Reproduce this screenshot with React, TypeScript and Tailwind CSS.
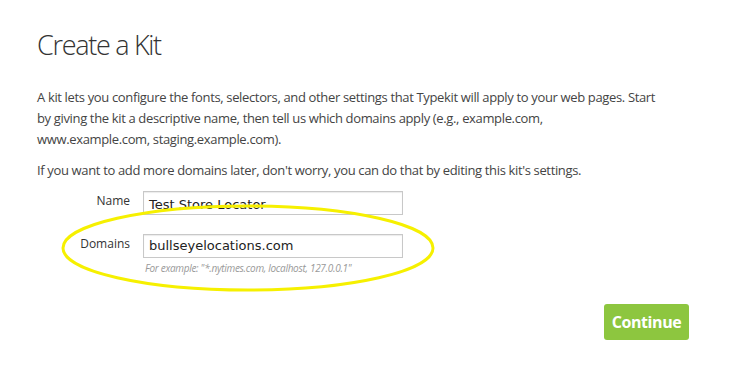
import React from 'react';

export default function App() {
  return (
    <div className="relative w-[743px] h-[380px] bg-white overflow-hidden" style={{ fontFamily: '"Open Sans", "Liberation Sans", sans-serif' }}>
      <div className="pl-[37px] pr-[20px] pt-[28px]">
        {/* Header */}
        <h1 className="text-[27px] leading-[34px] font-light text-[#333] tracking-[-1.3px]">Create a Kit</h1>

        {/* Intro */}
        <p className="mt-[25px] text-[13px] leading-[21px] text-[#444] tracking-[-0.35px] whitespace-nowrap">
          A kit lets you configure the fonts, selectors, and other settings that Typekit will apply to your web pages. Start
          <br />
          by giving the kit a descriptive name, then tell us which domains apply (e.g., example.com,
          <br />
          www.example.com, staging.example.com).
        </p>
        <p className="mt-[10px] text-[13px] leading-[21px] text-[#444] tracking-[-0.35px] whitespace-nowrap">
          If you want to add more domains later, don't worry, you can do that by editing this kit's settings.
        </p>

        {/* Form */}
        <div className="mt-[10px] flex flex-col gap-[19px]">
          <div className="flex items-start">
            <label className="w-[93px] text-right text-[12px] leading-[18px] text-[#333] pt-[1px]">Name</label>
            <div className="ml-[13px] w-[260px] h-[24px] border border-[#c8c8c8] bg-white flex items-center px-[5px] shadow-[inset_0_1px_1px_rgba(0,0,0,0.08)]">
              <span className="text-[13px] text-[#222] pt-[3px]" style={{ fontFamily: '"DejaVu Sans", sans-serif' }}>Test Store Locator</span>
            </div>
          </div>
          <div className="flex items-start">
            <label className="w-[93px] text-right text-[12px] leading-[18px] text-[#333] pt-[1px]">Domains</label>
            <div className="ml-[13px]">
              <div className="w-[260px] h-[24px] border border-[#c8c8c8] bg-white flex items-center px-[5px] shadow-[inset_0_1px_1px_rgba(0,0,0,0.08)]">
                <span className="text-[13px] text-[#222]" style={{ fontFamily: '"DejaVu Sans", sans-serif' }}>bullseyelocations.com</span>
              </div>
              <div className="mt-[3px] pl-[2px] text-[10px] italic text-[#999] tracking-[-0.3px]">
                For example: "*.nytimes.com, localhost, 127.0.0.1"
              </div>
            </div>
          </div>
        </div>

        <div className="flex justify-end pr-[34px] mt-[28px]">
          <button className="w-[85px] h-[36px] rounded-[3px] bg-[#8dc63f] text-white text-[16px] font-bold tracking-[-0.4px]">
            Continue
          </button>
        </div>
      </div>

      {/* Highlight ellipse */}
      <svg className="absolute left-0 top-0 pointer-events-none" width="743" height="380">
        <ellipse cx="248" cy="248" rx="185" ry="42" fill="none" stroke="#f6f000" strokeWidth="3" />
      </svg>
    </div>
  );
}
